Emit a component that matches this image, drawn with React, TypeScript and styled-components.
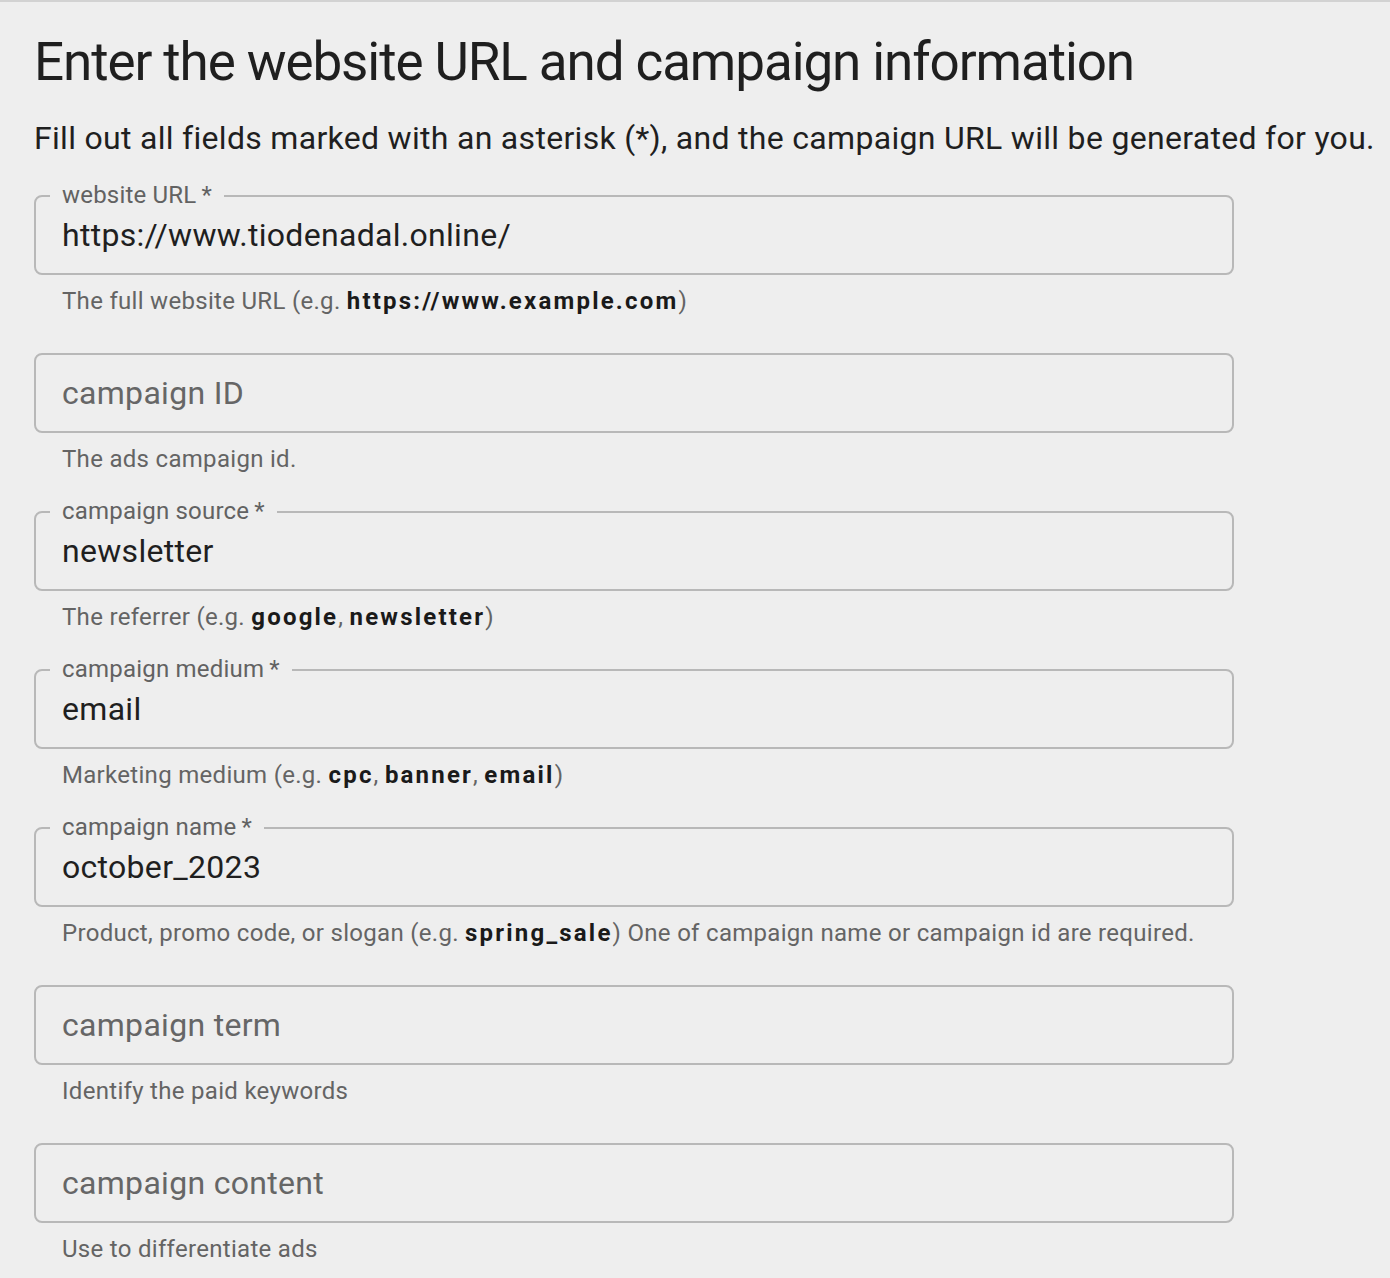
import React from "react";
import styled, { createGlobalStyle } from "styled-components";

const GlobalStyle = createGlobalStyle`
  body {
    margin: 0;
    background: #eeeeee;
    font-family: Roboto, "Liberation Sans", sans-serif;
  }
`;

const Page = styled.main`
  border-top: 2px solid #d2d2d2;
  padding: 28px 34px 0;
  min-height: 1276px;
  box-sizing: border-box;
`;

const Heading = styled.h1`
  margin: 0 0 20px;
  font-size: 53px;
  font-weight: 400;
  line-height: 64px;
  letter-spacing: -1.1px;
  color: #1f1f1f;
  white-space: nowrap;
`;

const Intro = styled.p`
  margin: 0 0 33px;
  font-size: 32px;
  line-height: 48px;
  letter-spacing: 0.3px;
  color: #1f1f1f;
  white-space: nowrap;
`;

const Form = styled.form`
  display: flex;
  flex-direction: column;
  gap: 32px;
  width: 1200px;
`;

const Field = styled.div`
  display: flex;
  flex-direction: column;
`;

const Box = styled.div`
  position: relative;
  border: 2px solid #b8b8b8;
  border-radius: 8px;
`;

const FloatLabel = styled.label`
  position: absolute;
  left: 14px;
  top: -14px;
  padding: 0 12px;
  background: #eeeeee;
  font-size: 24px;
  line-height: 24px;
  letter-spacing: 0.2px;
  color: #626262;
`;

const Input = styled.input`
  display: block;
  width: 100%;
  box-sizing: border-box;
  height: 76px;
  padding: 0 26px;
  border: none;
  outline: none;
  background: transparent;
  font-family: Roboto, "Liberation Sans", sans-serif;
  font-size: 32px;
  letter-spacing: 0.3px;
  color: #1f1f1f;

  &::placeholder {
    color: #666666;
    opacity: 1;
  }
`;

const Helper = styled.p`
  margin: 6px 0 0 28px;
  font-size: 24px;
  line-height: 40px;
  letter-spacing: 0.3px;
  color: #646464;
  white-space: nowrap;

  b {
    font-weight: 700;
    letter-spacing: 2.2px;
    color: #1a1a1a;
  }
`;

type FieldDef = {
  name: string;
  label: string;
  required?: boolean;
  value?: string;
  help: React.ReactNode;
};

const fields: FieldDef[] = [
  {
    name: "url",
    label: "website URL",
    required: true,
    value: "https://www.tiodenadal.online/",
    help: (
      <>
        The full website URL (e.g. <b>https://www.example.com</b>)
      </>
    ),
  },
  { name: "id", label: "campaign ID", help: "The ads campaign id." },
  {
    name: "source",
    label: "campaign source",
    required: true,
    value: "newsletter",
    help: (
      <>
        The referrer (e.g. <b>google</b>, <b>newsletter</b>)
      </>
    ),
  },
  {
    name: "medium",
    label: "campaign medium",
    required: true,
    value: "email",
    help: (
      <>
        Marketing medium (e.g. <b>cpc</b>, <b>banner</b>, <b>email</b>)
      </>
    ),
  },
  {
    name: "name",
    label: "campaign name",
    required: true,
    value: "october_2023",
    help: (
      <>
        Product, promo code, or slogan (e.g. <b>spring_sale</b>) One of campaign
        name or campaign id are required.
      </>
    ),
  },
  { name: "term", label: "campaign term", help: "Identify the paid keywords" },
  { name: "content", label: "campaign content", help: "Use to differentiate ads" },
];

const App = () => {
  return (
    <Page>
      <GlobalStyle />
      <Heading>Enter the website URL and campaign information</Heading>
      <Intro>
        Fill out all fields marked with an asterisk (*), and the campaign URL
        will be generated for you.
      </Intro>
      <Form onSubmit={(e) => e.preventDefault()}>
        {fields.map((f) => (
          <Field key={f.name}>
            <Box>
              {f.value !== undefined && (
                <FloatLabel htmlFor={f.name}>
                  {f.label}
                  {f.required ? "\u2009*" : ""}
                </FloatLabel>
              )}
              <Input
                id={f.name}
                name={f.name}
                defaultValue={f.value}
                placeholder={f.value === undefined ? f.label : undefined}
              />
            </Box>
            <Helper>{f.help}</Helper>
          </Field>
        ))}
      </Form>
    </Page>
  );
};

export default App;
